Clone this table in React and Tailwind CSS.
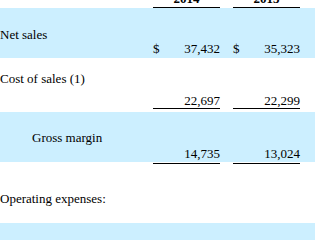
import React from 'react';

const serif = { fontFamily: '"Liberation Serif", "Times New Roman", serif' };

const Num = ({ value, dollar }) => (
  <div className="flex justify-between leading-[15px]">
    <span>{dollar ? '$' : ''}</span>
    <span>{value}</span>
  </div>
);

const App = () => {
  return (
    <div className="w-[315px] h-[240px] overflow-hidden bg-white text-black text-[13px]" style={serif}>
      <div className="-mt-[12px]">
        {/* Header */}
        <div className="flex h-[20px]">
          <div className="flex-1" />
          <div className="w-[67px] pt-[3px] pb-px border-b border-black text-center font-bold leading-[15px]">2014</div>
          <div className="w-[13px]" />
          <div className="w-[67px] pt-[3px] pb-px border-b border-black text-center font-bold leading-[15px]">2013</div>
          <div className="w-[15px]" />
        </div>

        {/* Net sales */}
        <div className="flex h-[50px] bg-[#ccefff]">
          <div className="flex-1 pt-[19px] leading-[15px]">Net sales</div>
          <div className="w-[67px] flex flex-col justify-end pb-[2px]">
            <Num value="37,432" dollar />
          </div>
          <div className="w-[13px]" />
          <div className="w-[67px] flex flex-col justify-end pb-[2px]">
            <Num value="35,323" dollar />
          </div>
          <div className="w-[15px]" />
        </div>

        {/* Cost of sales */}
        <div className="flex h-[54px]">
          <div className="flex-1 pt-[13px] leading-[15px]">Cost of sales (1)</div>
          <div className="w-[67px] flex flex-col justify-end pb-[3px]">
            <div className="border-b border-black">
              <Num value="22,697" />
            </div>
          </div>
          <div className="w-[13px]" />
          <div className="w-[67px] flex flex-col justify-end pb-[3px]">
            <div className="border-b border-black">
              <Num value="22,299" />
            </div>
          </div>
          <div className="w-[15px]" />
        </div>

        {/* Gross margin */}
        <div className="flex h-[50px] bg-[#ccefff]">
          <div className="flex-1 pt-[18px] pl-[32px] leading-[15px]">Gross margin</div>
          <div className="w-[67px] flex flex-col justify-end pb-px">
            <Num value="14,735" />
          </div>
          <div className="w-[13px]" />
          <div className="w-[67px] flex flex-col justify-end pb-px">
            <Num value="13,024" />
          </div>
          <div className="w-[15px]" />
        </div>

        {/* Operating expenses */}
        <div className="flex h-[61px]">
          <div className="flex-1 pt-[29px] leading-[15px]">Operating expenses:</div>
          <div className="w-[67px] pt-px">
            <div className="border-t border-black" />
          </div>
          <div className="w-[13px]" />
          <div className="w-[67px] pt-px">
            <div className="border-t border-black" />
          </div>
          <div className="w-[15px]" />
        </div>

        <div className="h-[40px] bg-[#ccefff]" />
      </div>
    </div>
  );
};

export default App;
